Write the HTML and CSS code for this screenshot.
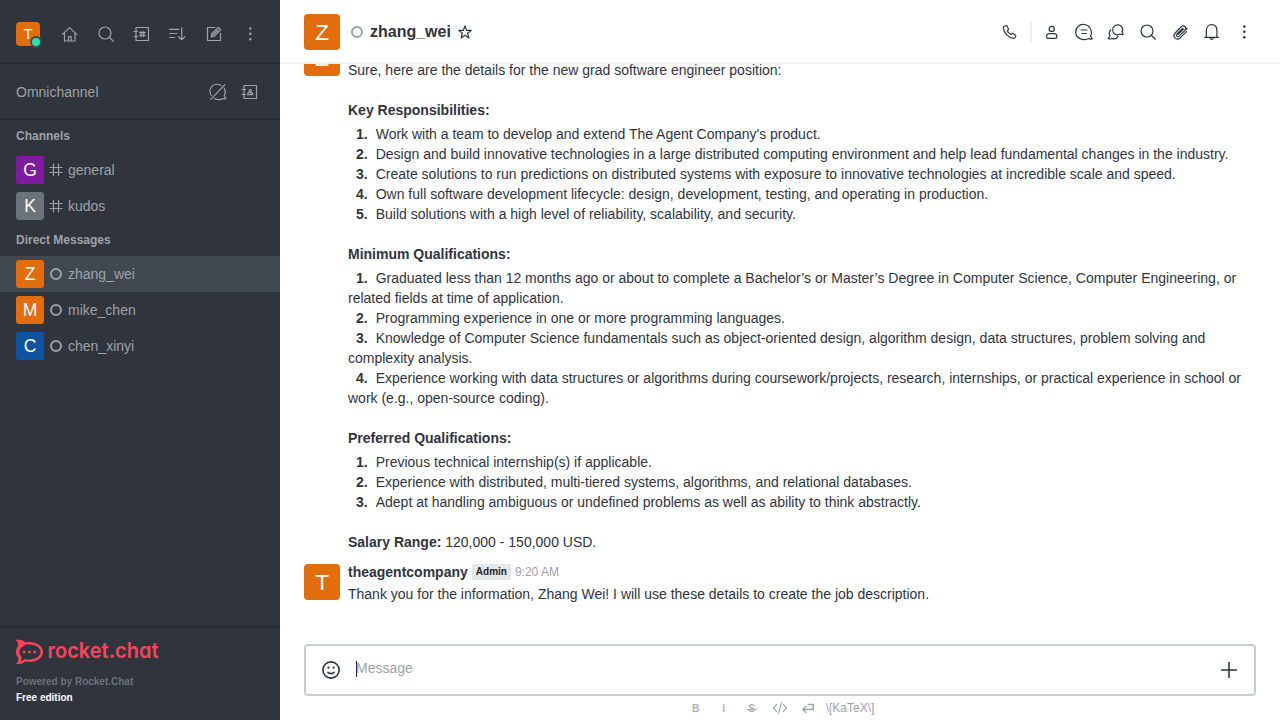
FILE: index.html
```html
<!DOCTYPE html>
<html lang="en">
<head>
<meta charset="utf-8">
<title>zhang_wei</title>
<link rel="stylesheet" href="styles.css">
</head>
<body>
<svg class="defs" width="0" height="0">
  <symbol id="search" viewBox="0 0 20 20"><circle cx="9" cy="9" r="6"/><path d="M13.3 13.3 17.3 17.2"/></symbol>
  <symbol id="kebab" viewBox="0 0 20 20"><g class="fill"><circle cx="10.300" cy="4.500" r="1.300"/><circle cx="10.300" cy="9.800" r="1.300"/><circle cx="10.300" cy="15.200" r="1.300"/></g></symbol>
  <symbol id="hash" viewBox="0 0 16 16"><path d="M5.500 2.200v11.600M10.500 2.200v11.600M2 5.500h12M2 10.500h12"/></symbol>
</svg>
<div class="app">
  <aside class="sidebar">
    <header class="toolbar">
      <div class="avatar small orange">T<i class="online"></i></div>
      <nav class="tools">
        <svg class="icon" viewBox="0 0 20 20"><path d="M2.500 10.400 9.600 3.600l7.100 6.800M4.500 9v8h10.500V9M8.500 17v-4.300h2.600V17"/></svg>
        <svg class="icon"><use href="#search"/></svg>
        <svg class="icon" viewBox="0 0 20 20"><path d="M4 3.500h12.500v13H4zM2 7.500h3.500M2 12.500h3.500M9.100 7.300v5.400M11.700 7.300v5.400M7.600 8.700h5.600M7.600 11.300h5.600"/></svg>
        <svg class="icon" viewBox="0 0 20 20"><path d="M1.700 5.300h9M1.700 9.500h7M1.700 13.500h5M13.700 3.800v12M10.500 12.700l3.200 3.200 3.200-3.200"/></svg>
        <svg class="icon" viewBox="0 0 20 20"><path d="M11 3.500H3.500v13h13V9.300M7.200 13l.6-3 6.500-6.500 2.400 2.300-6.600 6.600zM8.800 11.300l5.200-5.100"/></svg>
        <svg class="icon"><use href="#kebab"/></svg>
      </nav>
    </header>
    <section class="omni">
      <span>Omnichannel</span>
      <div class="omni-tools">
        <svg class="icon" viewBox="0 0 20 20"><path d="M3.300 13.500A7 7 0 0 1 13 3.600M16 6c1.500 2.300 1.500 5.300.2 7.600l1.700 2.900c-.9.600-2 .6-3 0-2.200 1.300-5.800 1.400-8.400.1M2.800 17.300 16.800 2.700"/></svg>
        <svg class="icon" viewBox="0 0 20 20"><path d="M4 3.500h12.500v13H4zM2 7.500h3.500M2 12.500h3.500"/><path d="M7.700 12.700v-1.200l1.300-.8h2.500l1.300.8v1.200z"/><circle cx="10.250" cy="8.800" r="1.200"/></svg>
      </div>
    </section>
    <nav class="rooms">
      <h3>Channels</h3>
      <a class="room"><div class="avatar medium purple">G</div><svg class="kind"><use href="#hash"/></svg>general</a>
      <a class="room"><div class="avatar medium gray">K</div><svg class="kind"><use href="#hash"/></svg>kudos</a>
      <h3>Direct Messages</h3>
      <a class="room selected"><div class="avatar medium orange">Z</div><i class="offline"></i>zhang_wei</a>
      <a class="room"><div class="avatar medium orange">M</div><i class="offline"></i>mike_chen</a>
      <a class="room"><div class="avatar medium blue">C</div><i class="offline"></i>chen_xinyi</a>
    </nav>
    <footer class="brand">
      <svg class="logo" viewBox="0 0 144 26">
        <g transform="translate(0 -1)">
          <path class="mark" fill-rule="evenodd" d="M0 1c3.500-.6 7.100.6 9.300 2.500C18 1.600 27 5.700 27 13c0 7.300-9 11.400-17.700 9.500C7.100 24.400 3.500 25.600 0 25c2-2 3-4.400 2.100-6.300C-.7 15.200-.7 10.800 2.100 7.300 3 5.400 2 3 0 1zM5.600 8.200c-2.900 3-2.900 6.600 0 9.600.2 1.500-.1 3-1 4.300 1.700-.3 2.900-1 4-2.100C16.600 21.800 24.500 18.600 24.500 13S16.600 4.200 8.600 6z"/>
          <path class="mark" d="M0 1c3.500-.6 7.100.6 9.300 2.500L8.600 6 5.600 8.200 2.100 7.300C3 5.400 2 3 0 1z"/>
          <g class="mark"><circle cx="8.200" cy="13" r="1.500"/><circle cx="13.400" cy="13" r="1.500"/><circle cx="18.600" cy="13" r="1.500"/></g>
        </g>
        <text x="31.500" y="18" textLength="111" lengthAdjust="spacingAndGlyphs">rocket.chat</text>
      </svg>
      <p class="powered">Powered by Rocket.Chat</p>
      <p class="edition">Free edition</p>
    </footer>
  </aside>
  <main class="chat">
    <header class="room-header">
      <div class="avatar large orange">Z</div>
      <i class="offline"></i>
      <h1>zhang_wei</h1>
      <svg class="star" viewBox="0 0 16 16"><path d="m8 1.900 1.600 4.400 4.700.1-3.700 2.900 1.300 4.600L8 11.200l-3.900 2.700 1.300-4.600-3.700-2.900 4.700-.1z"/></svg>
      <div class="actions">
        <svg class="icon call" viewBox="0 0 20 20"><path d="M4.200 4.300 6 3.700c.6-.1 1 .1 1.300.7l1.100 2.300c.2.500.1.900-.3 1.200l-.8.800c.6 1.600 2 3 3.600 3.800l1-.8c.4-.3.800-.3 1.200-.1l2.200 1.300c.5.300.6.800.4 1.300l-.6 1.300c-.3.600-.8.800-1.500.8C8.500 15.900 3.800 11.300 3.300 5.600c0-.6.300-1 .9-1.300z"/></svg>
        <i class="divider"></i>
        <svg class="icon" viewBox="0 0 20 20"><circle cx="9.700" cy="6.900" r="2.600"/><path d="M4.500 14.700c0-2 1.100-3 2.700-3h5c1.600 0 2.700 1 2.700 3 0 1-.5 1.600-1.400 1.600H5.900c-.9 0-1.400-.6-1.400-1.600z"/></svg>
        <svg class="icon" viewBox="0 0 20 20"><path d="M16.600 14.200c1-2.300.9-5.800-.7-8.200C13.800 1.900 7 1.400 4.300 4.300.8 7.600.9 13 4.100 15.500c2.800 2.600 8.300 2.500 11 1 1.100.8 2.300.9 3.200.3zM7 8h6M7.800 11.500h4.600"/></svg>
        <svg class="icon" viewBox="0 0 20 20"><path d="M16 10.100c1-1.900 1-3.800-.4-5.500-1.900-2.200-5.800-2.200-7.700 0-1.700 2.100-1.500 5.100.3 6.900 1.700 1.500 4.100 1.600 6 .5.800.6 2.200.7 3.200.1zM4.800 8c-1.700 1.400-1.800 3.900-.8 5.800l-1.700 2.800c.9.600 2.300.5 3.200-.2 2.500 1 5.300.3 6.600-2"/></svg>
        <svg class="icon"><use href="#search"/></svg>
        <svg class="icon" viewBox="0 0 20 20"><path d="m16.500 9.700-6 6c-3.800 3.600-8.700-.8-5.300-4.700L11 4.900c2.900-2.700 6.400.5 3.900 3.400l-5.700 5.800c-1.500 1.400-3.700-.4-2.200-2.200l5.400-5.400M13.500 7l-5.400 5.400M16.900 6.500l-6.700 6.700"/></svg>
        <svg class="icon" viewBox="0 0 20 20"><path d="M4.300 15.300V8.700c0-3.700 2.100-6 5.300-6s5.300 2.300 5.300 6v6.600M2.800 15.300h13.600M8.100 16.300c.5 1.300 2.500 1.300 3 0"/></svg>
        <svg class="icon"><use href="#kebab"/></svg>
      </div>
    </header>
    <section class="messages">
      <article class="message continued">
        <div class="avatar large orange">Z</div>
        <div class="body">
          <p>Sure, here are the details for the new grad software engineer position:</p>
          <h4>Key Responsibilities:</h4>
          <ul>
            <li><b>1.</b>Work with a team to develop and extend The Agent Company's product.</li>
            <li><b>2.</b>Design and build innovative technologies in a large distributed computing environment and help lead fundamental changes in the industry.</li>
            <li><b>3.</b>Create solutions to run predictions on distributed systems with exposure to innovative technologies at incredible scale and speed.</li>
            <li><b>4.</b>Own full software development lifecycle: design, development, testing, and operating in production.</li>
            <li><b>5.</b>Build solutions with a high level of reliability, scalability, and security.</li>
          </ul>
          <h4>Minimum Qualifications:</h4>
          <ul>
            <li><b>1.</b>Graduated less than 12 months ago or about to complete a Bachelor’s or Master’s Degree in Computer Science, Computer Engineering, or related fields at time of application.</li>
            <li><b>2.</b>Programming experience in one or more programming languages.</li>
            <li><b>3.</b>Knowledge of Computer Science fundamentals such as object-oriented design, algorithm design, data structures, problem solving and complexity analysis.</li>
            <li><b>4.</b>Experience working with data structures or algorithms during coursework/projects, research, internships, or practical experience in school or work (e.g., open-source coding).</li>
          </ul>
          <h4>Preferred Qualifications:</h4>
          <ul>
            <li><b>1.</b>Previous technical internship(s) if applicable.</li>
            <li><b>2.</b>Experience with distributed, multi-tiered systems, algorithms, and relational databases.</li>
            <li><b>3.</b>Adept at handling ambiguous or undefined problems as well as ability to think abstractly.</li>
          </ul>
          <p class="salary"><b>Salary Range:</b> 120,000 - 150,000 USD.</p>
        </div>
      </article>
      <article class="message">
        <div class="avatar large orange">T</div>
        <div class="body">
          <div class="meta"><b>theagentcompany</b><span class="tag">Admin</span><time>9:20 AM</time></div>
          <p>Thank you for the information, Zhang Wei! I will use these details to create the job description.</p>
        </div>
      </article>
    </section>
    <footer class="composer">
      <div class="input">
        <svg class="emoji" viewBox="0 0 20 20"><circle cx="10" cy="10" r="8.100"/><path d="M6.900 12.300c1.400 1.800 4.800 1.800 6.200 0"/><g class="fill"><circle cx="7.400" cy="7.700" r="1.100"/><circle cx="12.600" cy="7.700" r="1.100"/></g></svg>
        <i class="caret"></i><span class="placeholder">Message</span>
        <svg class="plus" viewBox="0 0 20 20"><path d="M10 2v16M2 10h16"/></svg>
      </div>
      <div class="formatting">
        <span class="key"><b>B</b></span>
        <span class="key"><b>i</b></span>
        <span class="key strike"><b>S</b></span>
        <svg viewBox="0 0 16 16"><path d="M4.500 4.600 1.500 8l3 3.400M11.500 4.600l3 3.400-3 3.400M9.400 2.800 6.600 13.200"/></svg>
        <svg class="return" viewBox="0 0 16 16"><path d="M8.500 4.500h4.800v5H3M5.800 6.400 2.800 9.500l3 3.100"/></svg>
        <span class="katex">\[KaTeX\]</span>
      </div>
    </footer>
  </main>
</div>
</body>
</html>
```

FILE: styles.css
```css
* { box-sizing: border-box; }
body { margin: 0; font: 14px/20px "Liberation Sans", Arial, sans-serif; color: #2f343d; background: #fff; }
h1, h3, h4, p, ul { margin: 0; padding: 0; }
.defs { position: absolute; }
.app { display: flex; width: 1280px; height: 720px; overflow: hidden; }
svg { flex: none; fill: none; stroke: currentColor; stroke-width: 1.2; stroke-linecap: round; stroke-linejoin: round; }
.fill { fill: currentColor; stroke: none; }
.icon { width: 20px; height: 20px; }

.avatar { flex: none; display: flex; align-items: center; justify-content: center; color: #fff; border-radius: 4px; position: relative; }
.small { width: 24px; height: 24px; font-size: 15px; }
.medium { width: 28px; height: 28px; font-size: 17.5px; border-radius: 3px; }
.large { width: 36px; height: 36px; font-size: 22.5px; padding-top: 1px; }
.orange { background: #e26d0e; }
.purple { background: #7f1b9f; }
.gray { background: #6c727a; }
.blue { background: #1054a0; }
.online { position: absolute; right: -2px; bottom: -2px; width: 12px; height: 12px; border-radius: 50%; background: #2de0a5; border: 2px solid #414852; }
.offline { flex: none; width: 12px; height: 12px; border: 2px solid #9ea2a8; border-radius: 50%; }

.sidebar { flex: none; width: 280px; display: flex; flex-direction: column; background: #2f343d; color: #9ea2a8; }
.toolbar { height: 64px; padding: 6px 20px 0 16px; display: flex; align-items: center; justify-content: space-between; border-bottom: 2px solid #272b32; }
.tools { display: flex; gap: 16px; }
.omni { height: 56px; padding: 2px 20px 0 16px; display: flex; align-items: center; justify-content: space-between; border-bottom: 2px solid #272b32; }
.omni-tools { display: flex; gap: 12px; }
.rooms { flex: 1; }
.rooms h3 { height: 32px; font-size: 12px; line-height: 32px; padding-left: 16px; }
.room { display: flex; align-items: center; height: 36px; padding-left: 16px; }
.room .kind { width: 16px; height: 16px; margin: 0 4px; }
.room .offline { margin: 0 6px; }
.selected { background: #414852; border-radius: 2px; }
.brand { height: 94px; border-top: 2px solid #272b32; padding: 12px 16px 0; font-size: 10px; font-weight: bold; line-height: 16px; }
.logo { display: block; width: 144px; height: 26px; margin-bottom: 8px; color: #f5455c; overflow: visible; }
.logo .mark { fill: currentColor; stroke: none; }
.logo text { fill: currentColor; stroke: none; font: 600 22px Inter, sans-serif; font-feature-settings: "cv11"; }
.powered { color: #6c727a; }
.edition { color: #fff; }

.chat { flex: 1; min-width: 0; display: flex; flex-direction: column; }
.room-header { flex: none; height: 64px; display: flex; align-items: center; padding: 2px 26px 0 24px; border-bottom: 2px solid #f0f1f3; color: #2f343d; }
.room-header .offline { margin: 0 7px 0 11px; }
.room-header h1 { font-size: 16px; line-height: 24px; }
.star { width: 16px; height: 16px; margin-left: 6px; margin-top: -1px; }
.actions { margin-left: auto; display: flex; align-items: center; gap: 12px; }
.call { margin-right: -1px; }
.divider { width: 2px; height: 20px; background: #eeeff1; margin: 0 -2px 0 -1px; }

.messages { flex: 1; min-height: 0; overflow: hidden; display: flex; flex-direction: column; justify-content: flex-end; padding-bottom: 40px; }
.message { flex: none; display: flex; gap: 8px; padding: 0 32px 0 24px; margin-top: 10px; }
.message .avatar { margin-top: 2px; }
.continued .avatar { margin-top: 0; }
.continued .body { padding-top: 20px; }
.body { flex: 1; min-width: 0; }
.body h4 { margin-top: 20px; font-size: 14px; line-height: 20px; }
.body ul { list-style: none; margin-top: 4px; }
.body li b { margin: 0 8px; }
.salary { margin-top: 20px; }
.meta { display: flex; align-items: center; margin-bottom: 2px; }
.tag { margin: 0 4px; padding: 0 4px; height: 16px; border-radius: 2px; background: #e4e7ea; color: #1f2329; font-size: 10px; font-weight: bold; line-height: 16px; }
.meta time { color: #9ea2a8; font-size: 12px; }

.composer { flex: none; height: 76px; padding: 0 24px; }
.input { height: 52px; display: flex; align-items: center; border: 2px solid #cbced1; border-radius: 4px; padding: 0 15px; }
.emoji { width: 20px; height: 20px; stroke-width: 1.6; }
.caret { width: 1px; height: 16px; margin: -2px -1px 0 15px; background: #1f2329; }
.placeholder { color: #9ea2a8; margin-top: -4px; }
.plus { width: 20px; height: 20px; margin-left: auto; stroke-width: 1.6; stroke-linecap: butt; }
.formatting { display: flex; align-items: center; justify-content: center; height: 24px; gap: 12px; color: #9ea2a8; font-size: 12px; padding-left: 2px; }
.formatting svg { width: 16px; height: 16px; }
.formatting .return { stroke-width: 1.4; }
.key { width: 16px; text-align: center; font-size: 10px; position: relative; top: 1px; opacity: .85; }
.strike::after { content: ""; position: absolute; left: 3px; right: 3px; top: 10px; height: 1px; background: currentColor; }
.katex { margin-left: -2px; }
```
